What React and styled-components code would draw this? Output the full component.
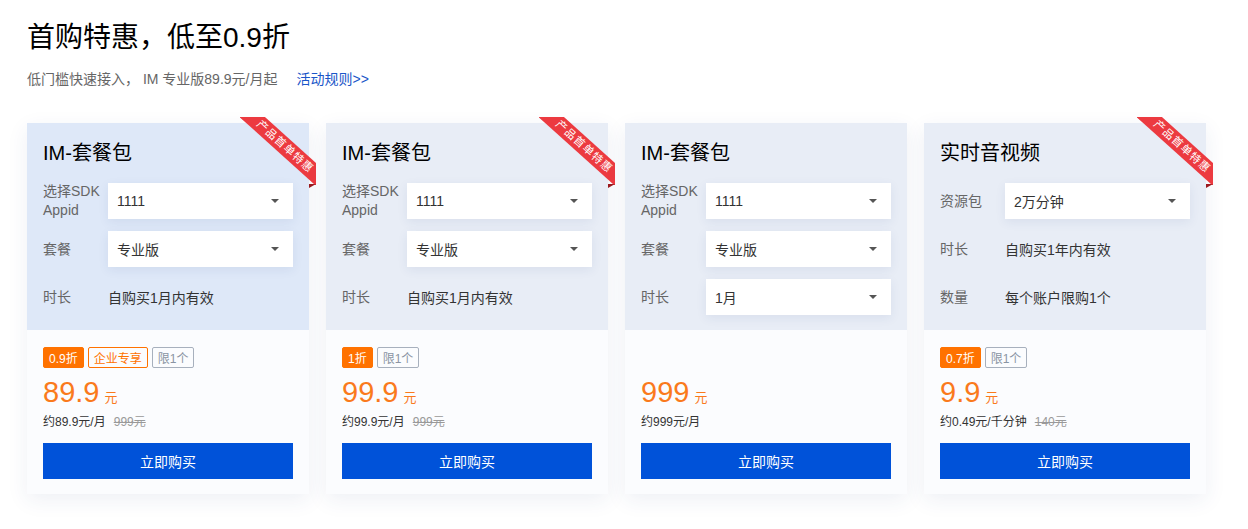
import React from "react";
import styled, { createGlobalStyle } from "styled-components";

const GlobalStyle = createGlobalStyle`
  body {
    margin: 0;
    background: #fff;
    font-family: "Liberation Sans", "Noto Sans CJK SC", sans-serif;
    color: #333;
  }
`;

const Page = styled.div`
  padding: 18px 27px 30px;
`;

const Heading = styled.h1`
  margin: 0;
  font-size: 28px;
  line-height: 40px;
  font-weight: 400;
  color: #000;
`;

const SubTitle = styled.div`
  margin-top: 11px;
  font-size: 14px;
  line-height: 20px;
  color: #666;
`;

const RuleLink = styled.a`
  margin-left: 19px;
  color: #1a56c8;
  text-decoration: none;
`;

const CardList = styled.div`
  display: flex;
  gap: 17px;
  margin-top: 34px;
`;

const Card = styled.div`
  position: relative;
  width: 282px;
  display: flex;
  flex-direction: column;
  box-shadow: 0 6px 20px rgba(40, 70, 130, 0.08);
`;

const CardHead = styled.div`
  background: ${(p) => (p.$active ? "#dee8f8" : "#e8edf6")};
  padding: 16px 16px 15px;
`;

const CardTitle = styled.div`
  font-size: 20px;
  line-height: 28px;
  color: #000;
  margin-bottom: 16px;
`;

const Rows = styled.div`
  display: flex;
  flex-direction: column;
  gap: 12px;
`;

const Row = styled.div`
  display: flex;
  align-items: center;
  height: 36px;
`;

const Label = styled.div`
  width: 65px;
  flex-shrink: 0;
  font-size: 14px;
  line-height: 19px;
  color: #666;
`;

const Value = styled.div`
  font-size: 14px;
  color: #333;
`;

const Select = styled.div`
  flex: 1;
  height: 36px;
  background: #fff;
  display: flex;
  align-items: center;
  justify-content: space-between;
  padding: 0 14px 0 9px;
  font-size: 14px;
  color: #333;
  box-shadow: 0 3px 10px rgba(40, 70, 130, 0.08);
`;

const Caret = styled.span`
  width: 0;
  height: 0;
  border-left: 4px solid transparent;
  border-right: 4px solid transparent;
  border-top: 4px solid #555;
`;

const CardBody = styled.div`
  background: #fbfcfe;
  padding: 17px 16px 15px;
`;

const Tags = styled.div`
  display: flex;
  gap: 4px;
  height: 21px;
`;

const Tag = styled.span`
  display: inline-flex;
  align-items: center;
  height: 21px;
  box-sizing: border-box;
  padding: 0 5px;
  font-size: 12px;
  border-radius: 2px;
  border: 1px solid
    ${(p) => (p.$kind === "gray" ? "#a7b0bd" : "#ff7200")};
  background: ${(p) => (p.$kind === "fill" ? "#ff7200" : "transparent")};
  color: ${(p) =>
    p.$kind === "fill" ? "#fff" : p.$kind === "gray" ? "#8a94a3" : "#ff7200"};
`;

const Price = styled.div`
  margin-top: 8px;
  height: 32px;
  display: flex;
  align-items: baseline;
  color: #fa7a1c;
  font-size: 29px;
  line-height: 32px;
`;

const Unit = styled.span`
  font-size: 13px;
  margin-left: 5px;
`;

const Note = styled.div`
  margin-top: 5px;
  font-size: 12px;
  line-height: 18px;
  color: #333;
`;

const Origin = styled.span`
  margin-left: 8px;
  color: #999;
  text-decoration: line-through;
`;

const BuyButton = styled.button`
  display: block;
  width: 100%;
  height: 36px;
  margin-top: 12px;
  border: none;
  background: #0052d9;
  color: #fff;
  font-family: inherit;
  font-size: 14px;
  cursor: pointer;
`;

const Ribbon = styled.div`
  position: absolute;
  top: -6px;
  right: -7px;
  width: 76px;
  height: 68px;
  pointer-events: none;
`;

const RibbonClip = styled.div`
  position: absolute;
  inset: 0;
  clip-path: inset(0);
`;

const RibbonBand = styled.div`
  position: absolute;
  left: -10px;
  top: 21px;
  width: 110px;
  height: 17px;
  line-height: 17px;
  background: #ec3a40;
  color: #fff;
  font-size: 11px;
  text-align: center;
  letter-spacing: 1px;
  transform: rotate(42deg);
`;

const Fold = styled.span`
  position: absolute;
  width: 0;
  height: 0;
  ${(p) =>
    p.$end
      ? `right: 0; bottom: -3px; border-left: 7px solid #9b1a1f; border-bottom: 4px solid transparent;`
      : `left: 0; top: 0; border-top: 5px solid #9b1a1f; border-left: 6px solid transparent;`}
`;

const cards = [
  {
    title: "IM-套餐包",
    active: true,
    ribbon: true,
    rows: [
      { label: "选择SDK Appid", select: "1111" },
      { label: "套餐", select: "专业版" },
      { label: "时长", value: "自购买1月内有效" },
    ],
    tags: [
      { text: "0.9折", kind: "fill" },
      { text: "企业专享", kind: "line" },
      { text: "限1个", kind: "gray" },
    ],
    price: "89.9",
    note: "约89.9元/月",
    origin: "999元",
  },
  {
    title: "IM-套餐包",
    ribbon: true,
    rows: [
      { label: "选择SDK Appid", select: "1111" },
      { label: "套餐", select: "专业版" },
      { label: "时长", value: "自购买1月内有效" },
    ],
    tags: [
      { text: "1折", kind: "fill" },
      { text: "限1个", kind: "gray" },
    ],
    price: "99.9",
    note: "约99.9元/月",
    origin: "999元",
  },
  {
    title: "IM-套餐包",
    rows: [
      { label: "选择SDK Appid", select: "1111" },
      { label: "套餐", select: "专业版" },
      { label: "时长", select: "1月" },
    ],
    tags: [],
    price: "999",
    note: "约999元/月",
  },
  {
    title: "实时音视频",
    ribbon: true,
    rows: [
      { label: "资源包", select: "2万分钟" },
      { label: "时长", value: "自购买1年内有效" },
      { label: "数量", value: "每个账户限购1个" },
    ],
    tags: [
      { text: "0.7折", kind: "fill" },
      { text: "限1个", kind: "gray" },
    ],
    price: "9.9",
    note: "约0.49元/千分钟",
    origin: "140元",
  },
];

const PackageCard = ({ data }) => (
  <Card>
    <CardHead $active={data.active}>
      <CardTitle>{data.title}</CardTitle>
      <Rows>
        {data.rows.map((r, i) => (
          <Row key={i}>
            <Label>{r.label}</Label>
            {r.select ? (
              <Select>
                {r.select}
                <Caret />
              </Select>
            ) : (
              <Value>{r.value}</Value>
            )}
          </Row>
        ))}
      </Rows>
    </CardHead>
    <CardBody>
      <Tags>
        {data.tags.map((t, i) => (
          <Tag key={i} $kind={t.kind}>
            {t.text}
          </Tag>
        ))}
      </Tags>
      <Price>
        {data.price}
        <Unit>元</Unit>
      </Price>
      <Note>
        {data.note}
        {data.origin && <Origin>{data.origin}</Origin>}
      </Note>
      <BuyButton>立即购买</BuyButton>
    </CardBody>
    {data.ribbon && (
      <Ribbon>
        <Fold />
        <RibbonClip>
          <RibbonBand>产品首单特惠</RibbonBand>
        </RibbonClip>
        <Fold $end />
      </Ribbon>
    )}
  </Card>
);

const App = () => (
  <Page>
    <GlobalStyle />
    <Heading>首购特惠，低至0.9折</Heading>
    <SubTitle>
      低门槛快速接入， IM 专业版89.9元/月起
      <RuleLink href="#">活动规则&gt;&gt;</RuleLink>
    </SubTitle>
    <CardList>
      {cards.map((c, i) => (
        <PackageCard key={i} data={c} />
      ))}
    </CardList>
  </Page>
);

export default App;
